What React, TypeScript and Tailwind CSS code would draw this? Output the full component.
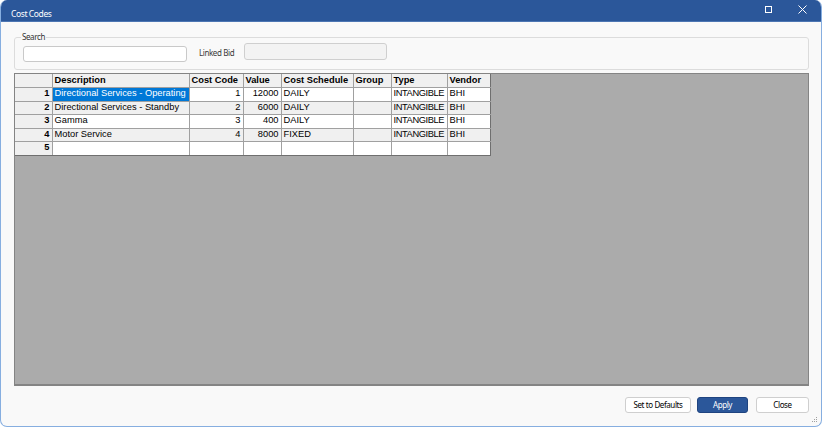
import React from "react";

const rows = [
  ["Directional Services - Operating", "1", "12000", "DAILY", "", "INTANGIBLE", "BHI"],
  ["Directional Services - Standby", "2", "6000", "DAILY", "", "INTANGIBLE", "BHI"],
  ["Gamma", "3", "400", "DAILY", "", "INTANGIBLE", "BHI"],
  ["Motor Service", "4", "8000", "FIXED", "", "INTANGIBLE", "BHI"],
  ["", "", "", "", "", "", ""],
];

const headers = ["Description", "Cost Code", "Value", "Cost Schedule", "Group", "Type", "Vendor"];
const colW = [37, 137, 54, 38, 72, 38, 56, 43];

export default function App() {
  return (
    <div className="w-[822px] h-[427px] overflow-hidden bg-white">
      <div
        className="relative w-[822px] h-[427px] flex flex-col bg-[#f9f9f9] border-l border-r border-b border-[#86aee0] rounded-[7px] overflow-hidden"
        style={{ fontFamily: '"Noto Sans", "Open Sans", sans-serif' }}
      >
        {/* Title bar */}
        <div className="h-[22px] shrink-0 bg-[#2b579a] flex items-start pl-[10px] border-b border-[#4d76b3]">
          <span className="mt-[10px] text-white text-[8.5px] tracking-[-0.4px] leading-none">Cost Codes</span>
          <div className="ml-auto flex items-start h-full">
            <div className="w-[34px] flex justify-center mt-[6px]">
              <div className="w-[7px] h-[7px] border border-white" />
            </div>
            <div className="w-[34px] flex justify-center mt-[5px] mr-[2px]">
              <svg width="9" height="9" viewBox="0 0 9 9">
                <path d="M0.5 0.5 L8.5 8.5 M8.5 0.5 L0.5 8.5" stroke="white" strokeWidth="1" />
              </svg>
            </div>
          </div>
        </div>

        {/* Body */}
        <div className="flex-1 flex flex-col pl-[13px] pr-[12px] pt-[11px] pb-[13px]">
          <fieldset className="border border-[#dcdcdc] rounded-[3px] h-[37px] pl-[8px] pr-[8px] m-0">
            <legend className="text-[8px] tracking-[-0.4px] leading-none text-[#333] px-[1px] ml-[-2px]">Search</legend>
            <div className="flex items-start">
              <div className="mt-[5px] w-[164px] h-[16px] bg-white border border-[#c9c9c9] rounded-[3px]" />
              <span className="ml-[12px] mt-[8px] text-[8px] tracking-[-0.4px] leading-none text-[#3a3a3a]">Linked Bid</span>
              <div className="ml-[10px] mt-[2px] w-[143px] h-[17px] bg-[#f3f3f3] border border-[#cfcfcf] rounded-[3px]" />
            </div>
          </fieldset>

          {/* Grid */}
          <div className="mt-[3px] flex-1 bg-[#ababab] border border-[#848484] border-b-2">
            <table
              className="border-collapse table-fixed w-[475px]"
              style={{ fontFamily: '"Liberation Sans", Arial, sans-serif' }}
            >
              <colgroup>
                {colW.map((w, i) => (
                  <col key={i} style={{ width: w }} />
                ))}
              </colgroup>
              <thead>
                <tr className="h-[13px]">
                  <th className="bg-[#f0f0f0] border border-[#a0a0a0] border-t-0 border-l-0 p-0" />
                  {headers.map((h, i) => (
                    <th
                      key={h}
                      className={`bg-[#f0f0f0] border border-[#a0a0a0] border-t-0 ${i === 6 ? "border-r-[#6f6f6f]" : ""} px-[2px] py-0 text-left text-[9.3px] leading-none font-bold text-black whitespace-nowrap overflow-hidden`}
                    >
                      {h}
                    </th>
                  ))}
                </tr>
              </thead>
              <tbody>
                {rows.map((r, ri) => {
                  const bg = ri % 2 === 1 ? "bg-[#f0f0f0]" : "bg-white";
                  return (
                    <tr key={ri} className={ri % 2 === 1 ? "h-[13px]" : "h-[14px]"}>
                      <td
                        className={`bg-[#f0f0f0] border border-[#a0a0a0] border-l-0 ${ri === 4 ? "border-b-[#6f6f6f]" : ""} px-[2px] py-0 text-right text-[9.3px] leading-none font-bold text-black`}
                      >
                        {ri + 1}
                      </td>
                      {r.map((c, ci) => {
                        const selected = ri === 0 && ci === 0;
                        const right = ci === 1 || ci === 2;
                        return (
                          <td
                            key={ci}
                            className={`${selected ? "bg-[#0078d7] text-white" : `${bg} text-black`} border border-[#a0a0a0] ${ci === 6 ? "border-r-[#6f6f6f]" : ""} ${ri === 4 ? "border-b-[#6f6f6f]" : ""} ${ci === 5 ? "tracking-[-0.4px]" : ""} px-[2px] py-0 text-[9.3px] leading-none whitespace-nowrap overflow-hidden ${right ? "text-right" : "text-left"}`}
                          >
                            {c}
                          </td>
                        );
                      })}
                    </tr>
                  );
                })}
              </tbody>
            </table>
          </div>

          {/* Buttons */}
          <div className="mt-[11px] flex justify-end items-center text-[8px] tracking-[-0.4px] leading-none">
            <button className="w-[66px] h-[16px] bg-white border border-[#cfcfcf] rounded-[3px] text-black">
              Set to Defaults
            </button>
            <button className="ml-[6px] w-[51px] h-[16px] bg-[#2b579a] border border-[#1f4480] rounded-[3px] text-white">
              Apply
            </button>
            <button className="ml-[8px] w-[53px] h-[16px] bg-white border border-[#cfcfcf] rounded-[3px] text-black">
              Close
            </button>
          </div>
        </div>

        {/* resize grip */}
        <svg className="absolute right-[3px] bottom-[3px]" width="7" height="7" viewBox="0 0 7 7">
          <rect x="5" y="1" width="1" height="1" fill="#a0a0a0" />
          <rect x="3" y="3" width="1" height="1" fill="#a0a0a0" />
          <rect x="5" y="3" width="1" height="1" fill="#a0a0a0" />
          <rect x="1" y="5" width="1" height="1" fill="#a0a0a0" />
          <rect x="3" y="5" width="1" height="1" fill="#a0a0a0" />
          <rect x="5" y="5" width="1" height="1" fill="#a0a0a0" />
        </svg>
      </div>
    </div>
  );
}
